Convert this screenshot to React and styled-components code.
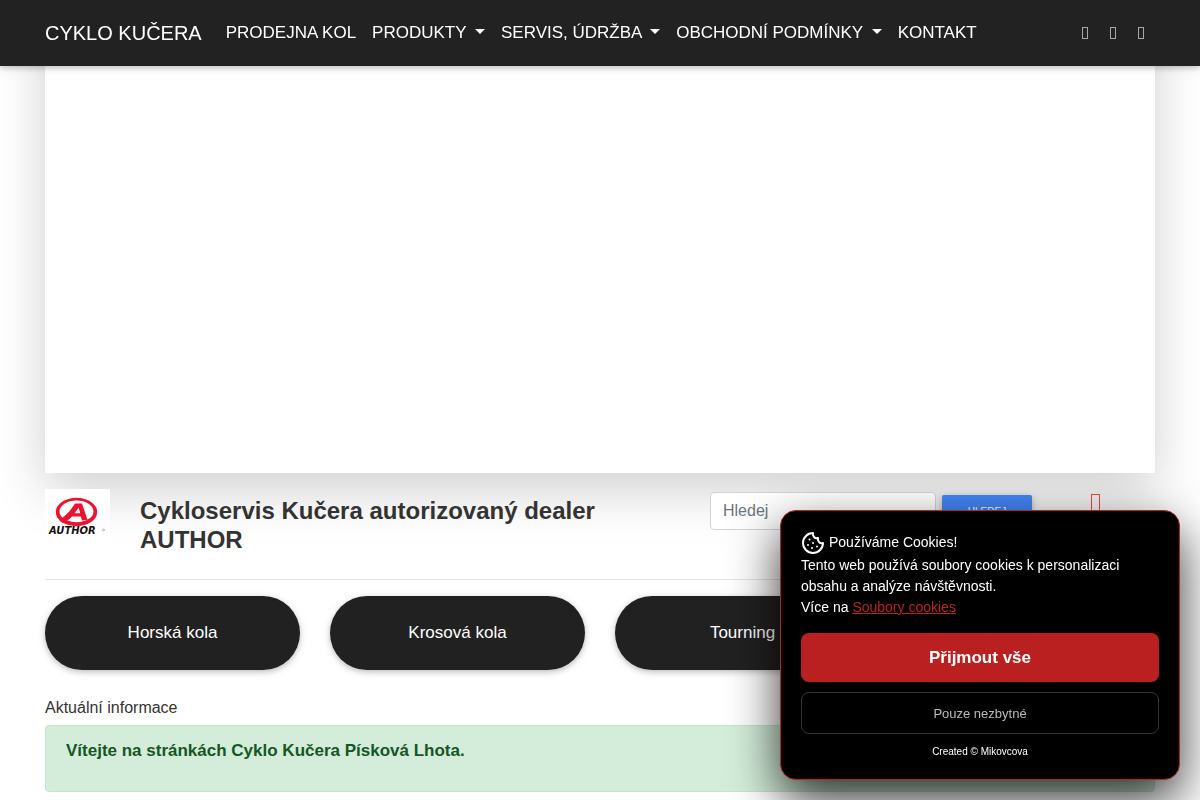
import React from 'react';
import styled, { createGlobalStyle } from 'styled-components';
import { Cookie } from 'lucide-react';

const GlobalStyle = createGlobalStyle`
*, *::before, *::after {
    box-sizing: border-box;
}
body {
    margin: 0;
    background: #ffffff;
    color: #333333;
    font-family: "Liberation Sans", Arial, sans-serif;
    font-size: 16px;
    line-height: 24px;
    overflow-x: hidden;
}
button, input {
    font-family: inherit;
}
`;

const Container = styled.div`
width: 100%;
max-width: 1140px;
margin: 0 auto;
padding: 0 15px;
`;

const NavbarStyle = styled.nav`
position: fixed;
top: 0;
width: 100%;
z-index: 10;
background-color: #222222;
box-shadow: 0 2px 5px rgba(0,0,0,.16), 0 2px 10px rgba(0,0,0,.12);
`;
const NavbarDiv = styled(Container)`
display: flex;
align-items: center;
min-height: 66px;
`;
const Brand = styled.a`
color: #ffffff;
font-size: 20px;
line-height: 30px;
margin-right: 16px;
text-decoration: none;
white-space: nowrap;
`;
const NavList = styled.ul`
display: flex;
list-style: none;
margin: 0;
padding: 0;
`;
const SocialList = styled(NavList)`
margin-left: auto;
`;
const NavLink = styled.a`
display: block;
padding: 8px;
color: #ffffff;
font-size: 17px;
line-height: 24px;
text-decoration: none;
white-space: nowrap;
`;
const SocialLink = styled.a`
display: flex;
align-items: center;
justify-content: center;
width: 28px;
height: 40px;
`;
const Caret = styled.span`
display: inline-block;
margin-left: 4px;
vertical-align: 4px;
border-top: 5px solid #ffffff;
border-left: 5px solid transparent;
border-right: 5px solid transparent;
`;
const GlyphBox = styled.span`
display: block;
width: ${props => props.$large ? '9px' : '6px'};
height: ${props => props.$large ? '20px' : '12px'};
border: 1px solid ${props => props.$large ? '#f44336' : '#a8a8a8'};
`;

const Carousel = styled.section`
height: 473px;
background: #ffffff;
box-shadow: 0 17px 50px rgba(0,0,0,.19);
`;

const Header = styled.header`
display: grid;
grid-template-columns: repeat(12, 1fr);
column-gap: 30px;
padding: 16px 0;
border-bottom: 1px solid #e5e5e5;
`;
const LogoLink = styled.a`
grid-column: span 1;
display: block;
height: 51px;
background: #ffffff;
`;
const Title = styled.h1`
grid-column: span 6;
margin: 7px 0 9px;
font-size: 24px;
line-height: 29px;
`;
const Search = styled.form`
grid-column: span 4;
display: flex;
align-items: flex-start;
padding-top: 3px;
`;
const SearchInput = styled.input`
width: 226px;
height: 38px;
padding: 6px 12px;
border: 1px solid #ced4da;
border-radius: 4px;
background: #ffffff;
font-size: 16px;
&::placeholder {
    color: #6c757d;
    opacity: 1;
}
`;
const SearchButton = styled.button`
margin: 3px 6px;
width: 90px;
height: 32px;
border: 0;
border-radius: 2px;
background: #4285f4;
color: #ffffff;
font-size: 10px;
text-transform: uppercase;
box-shadow: 0 2px 5px rgba(0,0,0,.16), 0 2px 10px rgba(0,0,0,.12);
`;
const CartLink = styled.a`
padding: 5px 1px;
`;

const Categories = styled.div`
display: grid;
grid-template-columns: repeat(4, 1fr);
gap: 30px;
padding: 16px 0 24px;
`;
const CategoryButton = styled.button`
height: 74px;
border: 0;
border-radius: 37px;
background: #212121;
color: #ffffff;
font-size: 17px;
box-shadow: 0 2px 5px rgba(0,0,0,.16), 0 2px 10px rgba(0,0,0,.12);
`;

const InfoTitle = styled.p`
margin: 2px 0 5px;
`;
const Alert = styled.div`
padding: 12px 20px 27px;
border: 1px solid #c3e6cb;
border-radius: 4px;
background: #d4edda;
color: #155724;
font-size: 17px;
line-height: 26px;
font-weight: bold;
`;

const CookieBox = styled.aside`
position: fixed;
right: 20px;
bottom: 20px;
z-index: 20;
width: 400px;
padding: 20px;
border: 1px solid #bb2020;
border-radius: 16px;
background: #000000;
color: #ffffff;
font-size: 14px;
line-height: 21px;
box-shadow: 0 20px 50px rgba(0,0,0,.8);
`;
const CookieHeading = styled.div`
display: flex;
gap: 4px;
height: 24px;
line-height: 23px;
`;
const CookieText = styled.p`
margin: 0 0 15px;
a {
    color: #bb2020;
}
`;
const CookieButton = styled.button`
display: block;
width: 100%;
height: ${props => props.$primary ? '49px' : '42px'};
margin-bottom: 10px;
border: ${props => props.$primary ? '0' : '1px solid #333333'};
border-radius: 8px;
background: ${props => props.$primary ? '#bb2020' : 'transparent'};
color: ${props => props.$primary ? '#ffffff' : '#bbbbbb'};
font-size: ${props => props.$primary ? '17px' : '13px'};
font-weight: ${props => props.$primary ? 'bold' : 'normal'};
`;
const Created = styled.div`
font-size: 10px;
line-height: 15px;
text-align: center;
`;

const menu = [
    { title: 'PRODEJNA KOL' },
    { title: 'PRODUKTY', dropdown: true },
    { title: 'SERVIS, ÚDRŽBA', dropdown: true },
    { title: 'OBCHODNÍ PODMÍNKY', dropdown: true },
    { title: 'KONTAKT' },
];

const social = ['Facebook', 'Instagram', 'E-mail'];

const categories = ['Horská kola', 'Krosová kola', 'Tourning'];

function AuthorLogo() {
    return (
        <svg width="65" height="51" viewBox="0 0 65 51" role="img" aria-label="Author">
            <ellipse cx="31.5" cy="23" rx="20.7" ry="14.2" fill="#f0102f" />
            <ellipse cx="31.5" cy="22.4" rx="17" ry="10.8" fill="#ffffff" />
            <path d="M14 31 C20 28 26 21 30 14.5 L37 14.5 L42.5 31 L37 31.5 L35.8 27.6 L27 27.6 C24 31 21 33 17.5 34 Z" fill="#f0102f" />
            <path d="M33.6 18.5 L35.2 24.2 L29.6 24.2 Z" fill="#ffffff" />
            <text x="4" y="45" fontFamily="DejaVu Sans" fontSize="10" fontWeight="bold" fontStyle="italic" fill="#111111">AUTHOR</text>
            <circle cx="58.5" cy="41" r="1" fill="none" stroke="#777777" strokeWidth="0.5" />
        </svg>
    );
}

function Navbar() {
    return (
        <NavbarStyle>
            <NavbarDiv>
                <Brand href="#">CYKLO KUČERA</Brand>
                <NavList>
                    {menu.map(item => (
                        <li key={item.title}>
                            <NavLink href="#">{item.title} {item.dropdown && <Caret />}</NavLink>
                        </li>
                    ))}
                </NavList>
                <SocialList>
                    {social.map(name => (
                        <li key={name}>
                            <SocialLink href="#" aria-label={name}><GlyphBox /></SocialLink>
                        </li>
                    ))}
                </SocialList>
            </NavbarDiv>
        </NavbarStyle>
    );
}

function Cookies() {
    return (
        <CookieBox>
            <CookieHeading><Cookie size={24} />Používáme Cookies!</CookieHeading>
            <CookieText>
                Tento web používá soubory cookies k personalizaci obsahu a analýze návštěvnosti.<br />
                Více na <a href="#">Soubory cookies</a>
            </CookieText>
            <CookieButton $primary>Přijmout vše</CookieButton>
            <CookieButton>Pouze nezbytné</CookieButton>
            <Created>Created © Mikovcova</Created>
        </CookieBox>
    );
}

export default function App() {
    return (
        <React.Fragment>
            <GlobalStyle />
            <Navbar />
            <Container as="main">
                <Carousel />
                <Header>
                    <LogoLink href="#"><AuthorLogo /></LogoLink>
                    <Title>Cykloservis Kučera autorizovaný dealer AUTHOR</Title>
                    <Search>
                        <SearchInput type="text" placeholder="Hledej" aria-label="Hledej" />
                        <SearchButton type="submit">Hledej</SearchButton>
                    </Search>
                    <CartLink href="#" aria-label="Košík"><GlyphBox $large /></CartLink>
                </Header>
                <Categories>
                    {categories.map(name => <CategoryButton key={name}>{name}</CategoryButton>)}
                </Categories>
                <InfoTitle>Aktuální informace</InfoTitle>
                <Alert>Vítejte na stránkách Cyklo Kučera Písková Lhota.</Alert>
            </Container>
            <Cookies />
        </React.Fragment>
    );
}
